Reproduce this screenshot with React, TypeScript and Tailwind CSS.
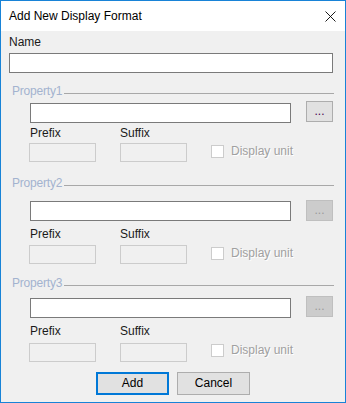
import React from "react";

type SecProps = {
  title: string;
  mt: string;
  rowMt: string;
  inputMt: string;
  btnH: string;
  labelMt: string;
  boxMt: string;
  cbMt: string;
  enabled: boolean;
};

function Section(p: SecProps) {
  return (
    <div className={p.mt}>
      <div className="flex h-[15px] items-start pl-[11px] pr-[11px]">
        <span className="text-[12px] leading-[15px] tracking-[-0.2px] text-[#a3b3cf]">{p.title}</span>
        <div className="ml-[2px] mt-[9px] h-px flex-1 bg-[#a8a8a8]" />
      </div>
      <div className={`flex items-start pl-[29px] ${p.rowMt}`}>
        <div className={`h-[20px] w-[261px] border border-[#7a7a7a] bg-white ${p.inputMt}`} />
        <div
          className={`ml-[15px] flex w-[27px] items-end justify-center border pb-[4px] text-[12px] leading-[12px] ${p.btnH} ${
            p.enabled
              ? "border-[#adadad] bg-[#e1e1e1] text-[#4a0050]"
              : "border-[#bfbfbf] bg-[#cccccc] text-[#9a9a9a]"
          }`}
        >
          ...
        </div>
      </div>
      <div className={`flex h-[15px] text-[12px] leading-[15px] text-[#1a1a1a] ${p.labelMt}`}>
        <span className="ml-[29px] w-[90px]">Prefix</span>
        <span>Suffix</span>
      </div>
      <div className={`flex items-start ${p.boxMt}`}>
        <div className="ml-[28px] h-[19px] w-[67px] border border-[#cccccc] bg-[#f0f0f0]" />
        <div className="ml-[24px] h-[19px] w-[67px] border border-[#cccccc] bg-[#f0f0f0]" />
        <div className={`ml-[24px] flex items-center ${p.cbMt}`}>
          <div className="h-[13px] w-[13px] border border-[#cccccc] bg-white" />
          <span className="ml-[7px] text-[12px] leading-[13px] text-[#a0a0a0] [text-shadow:1px_1px_0_#ffffff]">
            Display unit
          </span>
        </div>
      </div>
    </div>
  );
}

export default function App() {
  return (
    <div
      className="flex h-[403px] w-[346px] flex-col border border-[#1883d7] bg-[#f0f0f0] text-black"
      style={{ fontFamily: '"Liberation Sans", Arial, sans-serif' }}
    >
      <div className="flex h-[30px] items-center bg-white pl-[8px] pr-[9px]">
        <span className="text-[12px] leading-[15px]">Add New Display Format</span>
        <svg className="ml-auto" width="11" height="11" viewBox="0 0 11 11">
          <path d="M0.5 0.5 L10.5 10.5 M10.5 0.5 L0.5 10.5" stroke="#000" strokeWidth="0.9" fill="none" />
        </svg>
      </div>
      <div className="flex flex-1 flex-col">
        <div className="mt-[4px] h-[15px] pl-[8px] text-[12px] leading-[15px] text-[#1a1a1a]">Name</div>
        <div className="ml-[8px] mt-[3px] h-[20px] w-[324px] border border-[#7a7a7a] bg-white" />
        <Section
          title="Property1"
          mt="mt-[11px]"
          rowMt="mt-[2px]"
          inputMt="mt-[2px]"
          btnH="h-[21px]"
          labelMt="mt-[3px]"
          boxMt="mt-[2px]"
          cbMt="mt-[2px]"
          enabled={true}
        />
        <Section
          title="Property2"
          mt="mt-[14px]"
          rowMt="mt-[9px]"
          inputMt="mt-[1px]"
          btnH="h-[21px]"
          labelMt="mt-[6px]"
          boxMt="mt-[3px]"
          cbMt="mt-[2px]"
          enabled={false}
        />
        <Section
          title="Property3"
          mt="mt-[12px]"
          rowMt="mt-[5px]"
          inputMt="mt-[2px]"
          btnH="h-[21px]"
          labelMt="mt-[6px]"
          boxMt="mt-[4px]"
          cbMt="mt-[1px]"
          enabled={false}
        />
        <div className="mt-[10px] flex pl-[95px]">
          <button className="flex h-[23px] w-[73px] items-center justify-center border-2 border-[#0078d7] bg-[#e1e1e1] text-[12px] leading-[15px] text-black">
            Add
          </button>
          <button className="ml-[8px] flex h-[23px] w-[73px] items-center justify-center border border-[#adadad] bg-[#e1e1e1] text-[12px] leading-[15px] text-black">
            Cancel
          </button>
        </div>
      </div>
    </div>
  );
}
